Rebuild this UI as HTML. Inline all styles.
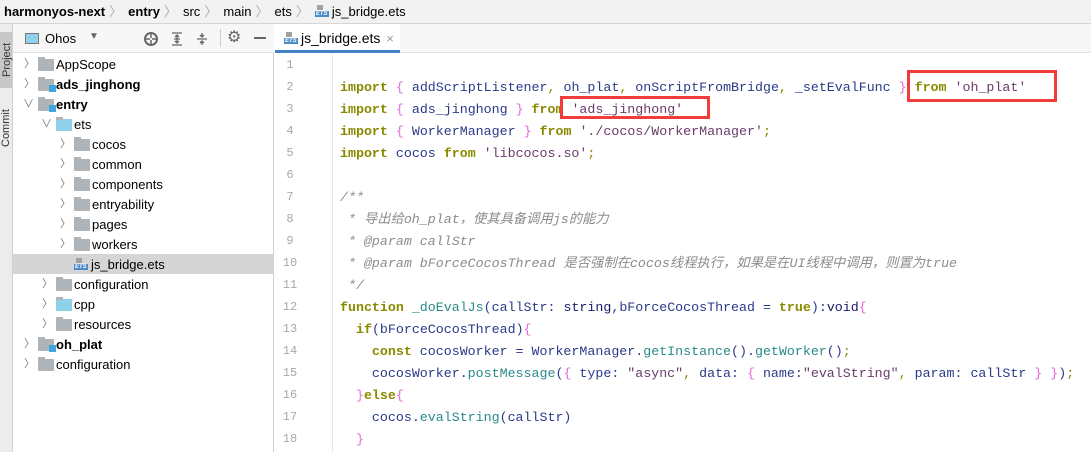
<!DOCTYPE html><html><head><meta charset="utf-8"><style>
*{margin:0;padding:0;box-sizing:border-box}
body{width:1091px;height:452px;overflow:hidden;background:#fff;font-family:"Liberation Sans","Noto Sans CJK SC",sans-serif;font-size:13px;color:#000;position:relative}
.abs{position:absolute}
#crumb{left:0;top:0;width:1091px;height:24px;background:#f2f2f2;border-bottom:1px solid #d6d6d6;line-height:23px;padding-left:4px;white-space:nowrap}
#crumb span{margin-right:4px}
#crumb .sep{color:#aaa;margin-right:6px}
#strip{left:0;top:24px;width:13px;height:428px;background:#ececec;border-right:1px solid #d0d0d0}
#proj{left:13px;top:24px;width:261px;height:428px;background:#fff;border-right:1px solid #d0d0d0}
#tb{left:13px;top:24px;width:261px;height:29px;border-bottom:1px solid #e0e0e0;background:#f7f7f7}
.row{position:absolute;left:13px;width:261px;height:20px;line-height:21px;white-space:nowrap}
.row .ar{position:absolute;top:0;color:#777;font-size:11px}
.row .fd{position:absolute;top:5px;width:16px;height:12px;background:#aeb4b8;border-radius:1px}
.row .fd:before{content:"";position:absolute;left:0;top:-2px;width:7px;height:3px;background:#aeb4b8}
.row .tx{position:absolute;top:0}
.b{font-weight:bold}
.mod:after{content:"";position:absolute;right:-2px;bottom:-1px;width:7px;height:7px;background:#3ea8de}
#tabs{left:275px;top:24px;width:816px;height:29px;background:#f7f7f7;border-bottom:1px solid #e0e0e0}
#gut{left:275px;top:53px;width:58px;height:399px;background:#fff;border-right:1px solid #e6e6e6}
.ln{position:absolute;left:275px;width:30px;text-align:center;color:#a8a8a8;font-family:"Liberation Mono",monospace;font-size:12px;line-height:22px}
.cl{position:absolute;left:340px;font-family:"Liberation Mono","Noto Sans CJK SC",monospace;font-size:13.3px;line-height:22px;white-space:pre;color:#2a3a8a}
.k{color:#8a8a00;font-weight:bold}
.s{color:#6b3b6b}
.p{color:#e468d8}
.o{color:#8a8a00}
.c{color:#8c8c8c;font-style:italic}
.f{color:#2a8a8a}
.box{position:absolute;border:3px solid #f23b3b}
.ets{display:inline-block;width:14px;height:12px;position:relative;vertical-align:-1px;margin-right:3px}
.ets:before{content:"ETS";position:absolute;left:0;bottom:0;font-size:6px;font-weight:bold;color:#fff;background:#4a8cc8;line-height:6px;padding:0 1px}
.ets:after{content:"";position:absolute;left:2px;top:0;width:6px;height:5px;background:#a0a0a0}
</style></head><body>
<div id="crumb" class="abs"><span class="b">harmonyos-next</span><span class="sep">〉</span><span class="b">entry</span><span class="sep">〉</span><span>src</span><span class="sep">〉</span><span>main</span><span class="sep">〉</span><span>ets</span><span class="sep">〉</span><i class="ets"></i><span>js_bridge.ets</span></div>
<div id="strip" class="abs"><div style="position:absolute;left:0;top:8px;width:12px;height:56px;background:#c8c8c8"></div><div style="position:absolute;left:-18px;top:22px;transform:rotate(-90deg);font-size:11px;color:#333;width:50px">Project</div><div style="position:absolute;left:-19px;top:92px;transform:rotate(-90deg);font-size:11px;color:#333;width:50px">Commit</div></div>
<div id="proj" class="abs"></div>
<div id="tb" class="abs">
<div class="abs" style="left:12px;top:9px;width:14px;height:11px;border:1px solid #777;background:#8fd0ea"></div>
<div class="abs" style="left:32px;top:7px">Ohos</div>
<div class="abs" style="left:76px;top:7px;color:#666;font-size:10px">▼</div>
<svg class="abs" style="left:130px;top:7px" width="16" height="16" viewBox="0 0 16 16"><circle cx="8" cy="8" r="6" fill="none" stroke="#666" stroke-width="2"/><path d="M8 2v5M8 9v5M2 8h5M9 8h5" stroke="#666" stroke-width="1.5"/></svg>
<svg class="abs" style="left:156px;top:7px" width="16" height="16" viewBox="0 0 16 16"><path d="M3 2h10M3 14h10M5 8h6M8 4v8M6 6l2-2 2 2M6 10l2 2 2-2" stroke="#666" stroke-width="1.3" fill="none"/></svg>
<svg class="abs" style="left:181px;top:7px" width="16" height="16" viewBox="0 0 16 16"><path d="M3 8h10M8 2v4M6 4l2 2 2-2M8 14v-4M6 12l2-2 2 2" stroke="#666" stroke-width="1.3" fill="none"/></svg>
<div class="abs" style="left:207px;top:5px;width:1px;height:18px;background:#ccc"></div>
<div class="abs" style="left:214px;top:3px;color:#666;font-size:16px">⚙</div>
<div class="abs" style="left:241px;top:13px;width:12px;height:2px;background:#666"></div>
</div>
<div class="row" style="top:54px"><span class="ar" style="left:11px">〉</span><i class="fd" style="left:25px"></i><span class="tx" style="left:43px">AppScope</span></div>
<div class="row" style="top:74px"><span class="ar" style="left:11px">〉</span><i class="fd mod" style="left:25px"></i><span class="tx b" style="left:43px">ads_jinghong</span></div>
<div class="row" style="top:94px"><span class="ar" style="left:10px">∨</span><i class="fd mod" style="left:25px"></i><span class="tx b" style="left:43px">entry</span></div>
<div class="row" style="top:114px"><span class="ar" style="left:28px">∨</span><i class="fd" style="left:43px;background:#8fd0ea"></i><span class="tx" style="left:61px">ets</span></div>
<div class="row" style="top:134px"><span class="ar" style="left:47px">〉</span><i class="fd" style="left:61px"></i><span class="tx" style="left:79px">cocos</span></div>
<div class="row" style="top:154px"><span class="ar" style="left:47px">〉</span><i class="fd" style="left:61px"></i><span class="tx" style="left:79px">common</span></div>
<div class="row" style="top:174px"><span class="ar" style="left:47px">〉</span><i class="fd" style="left:61px"></i><span class="tx" style="left:79px">components</span></div>
<div class="row" style="top:194px"><span class="ar" style="left:47px">〉</span><i class="fd" style="left:61px"></i><span class="tx" style="left:79px">entryability</span></div>
<div class="row" style="top:214px"><span class="ar" style="left:47px">〉</span><i class="fd" style="left:61px"></i><span class="tx" style="left:79px">pages</span></div>
<div class="row" style="top:234px"><span class="ar" style="left:47px">〉</span><i class="fd" style="left:61px"></i><span class="tx" style="left:79px">workers</span></div>
<div class="row" style="top:254px;background:#d5d5d5"><span class="tx" style="left:61px"><i class="ets"></i>js_bridge.ets</span></div>
<div class="row" style="top:274px"><span class="ar" style="left:29px">〉</span><i class="fd" style="left:43px"></i><span class="tx" style="left:61px">configuration</span></div>
<div class="row" style="top:294px"><span class="ar" style="left:29px">〉</span><i class="fd" style="left:43px;background:#8fd0ea"></i><span class="tx" style="left:61px">cpp</span></div>
<div class="row" style="top:314px"><span class="ar" style="left:29px">〉</span><i class="fd" style="left:43px"></i><span class="tx" style="left:61px">resources</span></div>
<div class="row" style="top:334px"><span class="ar" style="left:11px">〉</span><i class="fd mod" style="left:25px"></i><span class="tx b" style="left:43px">oh_plat</span></div>
<div class="row" style="top:354px"><span class="ar" style="left:11px">〉</span><i class="fd" style="left:25px"></i><span class="tx" style="left:43px">configuration</span></div>

<div id="tabs" class="abs"><div class="abs" style="left:0;top:0;width:125px;height:29px;background:#fff"></div><div class="abs" style="left:9px;top:6px;font-size:14px"><i class="ets"></i>js_bridge.ets <span style="color:#999;margin-left:2px;font-size:13px">×</span></div><div class="abs" style="left:0;top:26px;width:125px;height:3px;background:#4083c9"></div></div>
<div id="gut" class="abs"></div>
<div class="ln" style="top:54px">1</div><div class="ln" style="top:76px">2</div><div class="ln" style="top:98px">3</div><div class="ln" style="top:120px">4</div><div class="ln" style="top:142px">5</div><div class="ln" style="top:164px">6</div><div class="ln" style="top:186px">7</div><div class="ln" style="top:208px">8</div><div class="ln" style="top:230px">9</div><div class="ln" style="top:252px">10</div><div class="ln" style="top:274px">11</div><div class="ln" style="top:296px">12</div><div class="ln" style="top:318px">13</div><div class="ln" style="top:340px">14</div><div class="ln" style="top:362px">15</div><div class="ln" style="top:384px">16</div><div class="ln" style="top:406px">17</div><div class="ln" style="top:428px">18</div>
<div class="cl" style="top:77px"><span class="k">import</span> <span class="p">{</span> addScriptListener<span class="o">,</span> oh_plat<span class="o">,</span> onScriptFromBridge<span class="o">,</span> _setEvalFunc <span class="p">}</span> <span class="k">from</span> <span class="s">'oh_plat'</span></div>
<div class="cl" style="top:99px"><span class="k">import</span> <span class="p">{</span> ads_jinghong <span class="p">}</span> <span class="k">from</span> <span class="s">'ads_jinghong'</span></div>
<div class="cl" style="top:121px"><span class="k">import</span> <span class="p">{</span> WorkerManager <span class="p">}</span> <span class="k">from</span> <span class="s">'./cocos/WorkerManager'</span><span class="o">;</span></div>
<div class="cl" style="top:143px"><span class="k">import</span> cocos <span class="k">from</span> <span class="s">'libcocos.so'</span><span class="o">;</span></div>
<div class="cl c" style="top:187px">/**</div>
<div class="cl c" style="top:209px"> * 导出给oh_plat，使其具备调用js的能力</div>
<div class="cl c" style="top:231px"> * @param callStr</div>
<div class="cl c" style="top:253px"> * @param bForceCocosThread 是否强制在cocos线程执行，如果是在UI线程中调用，则置为true</div>
<div class="cl c" style="top:275px"> */</div>
<div class="cl" style="top:297px"><span class="k">function</span> <span class="f">_doEvalJs</span>(callStr: <span style="color:#1a1a6a">string</span>,bForceCocosThread = <span class="k">true</span>):<span style="color:#1a1a6a">void</span><span class="p">{</span></div>
<div class="cl" style="top:319px">  <span class="k">if</span>(bForceCocosThread)<span class="p">{</span></div>
<div class="cl" style="top:341px">    <span class="k">const</span> cocosWorker = WorkerManager.<span class="f">getInstance</span>().<span class="f">getWorker</span>()<span class="o">;</span></div>
<div class="cl" style="top:363px">    cocosWorker.<span class="f">postMessage</span>(<span class="p">{</span> type: <span class="s">"async"</span><span class="o">,</span> data: <span class="p">{</span> name:<span class="s">"evalString"</span><span class="o">,</span> param: callStr <span class="p">}</span> <span class="p">}</span>)<span class="o">;</span></div>
<div class="cl" style="top:385px">  <span class="p">}</span><span class="k">else</span><span class="p">{</span></div>
<div class="cl" style="top:407px">    cocos.<span class="f">evalString</span>(callStr)</div>
<div class="cl" style="top:429px">  <span class="p">}</span></div>
<div class="box" style="left:907px;top:70px;width:150px;height:32px"></div>
<div class="box" style="left:560px;top:96px;width:150px;height:23px"></div>
</body></html>
